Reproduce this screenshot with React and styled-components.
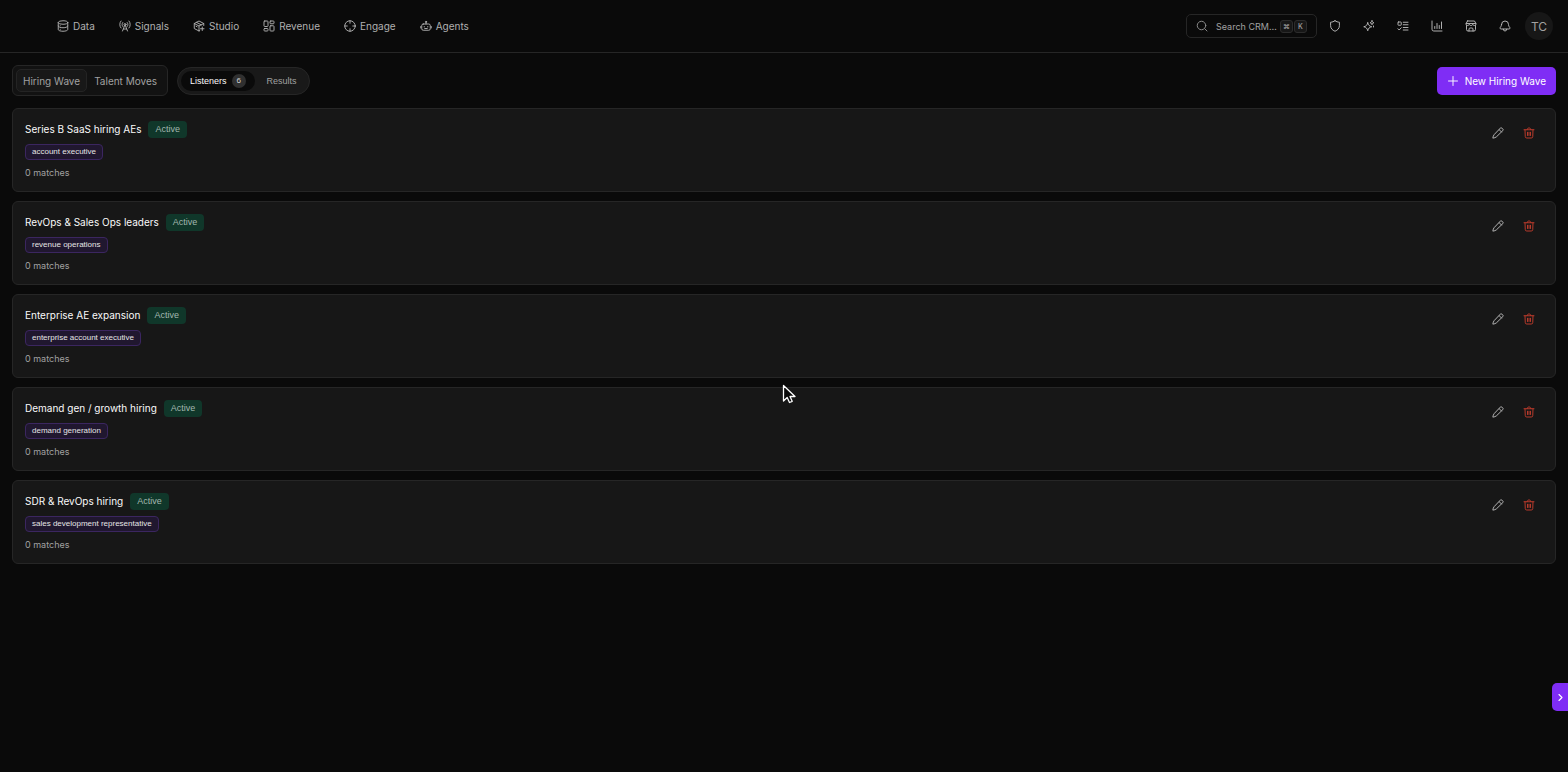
import React from 'react';
import styled, { createGlobalStyle, css } from 'styled-components';

const GlobalStyle = createGlobalStyle`
  * {
    box-sizing: border-box;
  }
  body {
    margin: 0;
    background: #0a0a0a;
    color: #fafafa;
    font-family: Inter, "Liberation Sans", sans-serif;
    font-size: 10px;
  }
  button, input {
    font: inherit;
    color: inherit;
  }
  button {
    padding: 0;
    border: 0;
    background: none;
    cursor: pointer;
  }
`;

const smallFont = '"Liberation Sans", Arial, sans-serif';

const Svg = styled.svg`
  flex: none;
  display: block;
  fill: none;
  stroke: currentColor;
  stroke-width: ${({ $stroke }) => $stroke || 1.9};
  stroke-linecap: round;
  stroke-linejoin: round;
`;

const Header = styled.header`
  display: flex;
  align-items: center;
  justify-content: space-between;
  height: 53px;
  padding: 0 15px 0 57px;
  border-bottom: 1px solid #262626;
`;

const Nav = styled.nav`
  display: flex;
  gap: 24px;
`;

const NavLink = styled.a`
  display: flex;
  align-items: center;
  gap: 4px;
  color: #b0b0b0;
  line-height: 16px;
  text-decoration: none;
`;

const Tools = styled.div`
  display: flex;
  align-items: center;
`;

const SearchBox = styled.label`
  display: flex;
  align-items: center;
  width: 131px;
  height: 24px;
  margin-right: 1px;
  padding: 0 9px;
  border: 1px solid #262626;
  border-radius: 5px;
  color: #8f8f8f;
`;

const SearchInput = styled.input`
  flex: 1;
  min-width: 0;
  margin: 0 2px 0 8px;
  padding: 0;
  border: 0;
  outline: 0;
  background: none;
  font-size: 9px;
  &::placeholder {
    color: #a1a1a1;
    opacity: 1;
  }
`;

const Keys = styled.span`
  display: flex;
  gap: 1px;
`;

const Key = styled.kbd`
  display: flex;
  align-items: center;
  justify-content: center;
  width: 13px;
  height: 13px;
  border: 1px solid #2c2c2c;
  border-radius: 3px;
  background: #171717;
  color: #a1a1a1;
  font-family: Inter, "DejaVu Sans", sans-serif;
  font-size: 7px;
  font-weight: 500;
`;

const ToolButton = styled.button`
  display: flex;
  align-items: center;
  justify-content: center;
  width: 34px;
  height: 28px;
  color: #b8b8b8;
  &:nth-of-type(6) {
    margin-right: 3px;
  }
`;

const Avatar = styled.button`
  width: 28px;
  height: 28px;
  border-radius: 50%;
  background: #171717;
  color: #a1a1a1;
  font-size: 12px;
`;

const Main = styled.main`
  padding: 12px;
`;

const Toolbar = styled.div`
  display: flex;
  align-items: center;
  gap: 9px;
  margin-bottom: 12px;
`;

const ModeTabs = styled.div`
  display: flex;
  padding: 3px;
  border: 1px solid #262626;
  border-radius: 6px;
  background: #121212;
`;

const ModeTab = styled.button`
  height: 23px;
  padding: 0 6px;
  border: 1px solid transparent;
  border-radius: 5px;
  color: #a1a1a1;
  ${({ $active }) => $active && css`
    border-color: #242424;
    background: #181818;
  `}
`;

const ViewTabs = styled.div`
  display: flex;
  gap: 3px;
  padding: 3px;
  border: 1px solid #262626;
  border-radius: 14px;
  background: #191919;
`;

const ViewTab = styled.button`
  display: flex;
  align-items: center;
  gap: 5px;
  height: 20px;
  padding: 0 9px;
  border-radius: 10px;
  color: #a1a1a1;
  font-family: ${smallFont};
  font-size: 9px;
  ${({ $active }) => $active && css`
    background: #0a0a0a;
    color: #fafafa;
  `}
`;

const Count = styled.span`
  width: 14px;
  border-radius: 7px;
  background: #303030;
  color: #d4d4d4;
  font-size: 8px;
  line-height: 14px;
`;

const NewButton = styled.button`
  display: flex;
  align-items: center;
  gap: 6px;
  height: 28px;
  margin-left: auto;
  padding: 0 10px;
  border-radius: 5px;
  background: #7f2df5;
  color: #fff;
`;

const CardList = styled.ul`
  display: flex;
  flex-direction: column;
  gap: 9px;
  margin: 0;
  padding: 0;
  list-style: none;
`;

const Card = styled.li`
  display: flex;
  align-items: flex-start;
  justify-content: space-between;
  padding: 12px;
  border: 1px solid #262626;
  border-radius: 6px;
  background: #171717;
`;

const Info = styled.div`
  display: flex;
  flex-direction: column;
  align-items: flex-start;
  gap: 6px;
`;

const TitleRow = styled.div`
  display: flex;
  align-items: center;
  gap: 7px;
`;

const Title = styled.h3`
  margin: 0;
  font-size: 10px;
  font-weight: 400;
  line-height: 17px;
`;

const Status = styled.span`
  padding: 0 7px;
  border-radius: 4px;
  background: #10372a;
  color: #a3b8af;
  font-family: ${smallFont};
  font-size: 9px;
  line-height: 17px;
`;

const Tag = styled.span`
  padding: 0 6px;
  border: 1px solid #3b2660;
  border-radius: 4px;
  background: #20172f;
  color: #e5e5e5;
  font-family: ${smallFont};
  font-size: 8px;
  line-height: 14px;
`;

const Matches = styled.p`
  margin: 0;
  color: #a1a1a1;
  font-size: 9px;
  line-height: 13px;
`;

const Actions = styled.div`
  display: flex;
  gap: 7px;
  padding-right: 2px;
`;

const ActionButton = styled.button`
  display: flex;
  align-items: center;
  justify-content: center;
  width: 24px;
  height: 24px;
  color: ${({ $danger }) => ($danger ? '#c03c2c' : '#b8b8b8')};
`;

const Drawer = styled.button`
  position: fixed;
  right: 0;
  bottom: 61px;
  display: flex;
  align-items: center;
  justify-content: center;
  width: 16px;
  height: 28px;
  border-radius: 5px 0 0 5px;
  background: #7f2df5;
  color: #fff;
`;

const Cursor = styled.svg`
  position: fixed;
  top: 50%;
  left: 50%;
  margin: -2px 0 0 -2px;
  pointer-events: none;
`;

const paths = {
  data: (
    <>
      <ellipse cx="12" cy="5" rx="9.500" ry="3.500" />
      <path d="M2.500 5v14c0 2 4.300 3.500 9.500 3.500s9.500-1.500 9.500-3.500V5" />
      <path d="M2.500 12c0 2 4.300 3.500 9.500 3.500s9.500-1.500 9.500-3.500" />
      <path d="M6.500 11.500v.1M6.500 18.500v.1" />
    </>
  ),
  signals: (
    <>
      <path d="M4 2C.7 5.500.7 12.500 4 16M7.500 5c-1.800 2.200-1.800 6 0 8M20 2c3.300 3.500 3.300 10.500 0 14M16.500 5c1.800 2.200 1.800 6 0 8" />
      <circle cx="12" cy="9" r="2" />
      <path d="M11.300 11 7 22M12.700 11 17 22M9 18h6" />
    </>
  ),
  studio: (
    <>
      <path d="M21.500 11V7L12 2 2.500 7v10l9.500 5 1.500-.8M2.500 7l9.500 5 9.500-5M12 12v10M7 4.700l9.500 5M6 12.500l2 1" />
      <path d="M18.500 14v7M15 17.500h7" />
    </>
  ),
  revenue: (
    <>
      <rect x="2" y="2" width="8" height="11" rx="1.500" />
      <rect x="14" y="2" width="8" height="5.500" rx="1.500" />
      <rect x="14" y="11.500" width="8" height="10.500" rx="1.500" />
      <rect x="2" y="17" width="8" height="5" rx="1.500" />
    </>
  ),
  engage: (
    <>
      <circle cx="12" cy="12" r="10.500" />
      <path d="M12 1.500v5M12 17.500v5M1.500 12h5M17.500 12h5" />
    </>
  ),
  agents: (
    <>
      <rect x="3.500" y="8" width="17" height="12.500" rx="3" />
      <circle cx="12" cy="3.700" r="1.200" />
      <path d="M12 5v3M1.500 13v3M22.500 13v3M8.500 13v1M15.500 13v1M9.500 17h5" />
    </>
  ),
  search: (
    <>
      <circle cx="11" cy="11" r="8.500" />
      <path d="m17.500 17.500 4.500 4.500" />
    </>
  ),
  shield: <path d="M12 1.500c-2.700 1.800-5.500 2.700-8.800 3v6.800c0 5.500 3.500 9 8.800 11.200 5.300-2.200 8.800-5.700 8.800-11.200V4.500c-3.300-.3-6.100-1.200-8.800-3Z" />,
  sparkles: (
    <>
      <path d="M9.500 5.500c1.200 5 3 6.800 8 8-5 1.200-6.800 3-8 8-1.200-5-3-6.800-8-8 5-1.200 6.800-3 8-8Z" />
      <path d="M18 1.500c.5 2.600 1.400 3.500 4 4-2.600.5-3.500 1.400-4 4-.5-2.600-1.400-3.500-4-4 2.600-.5 3.500-1.400 4-4ZM21 12v2" />
    </>
  ),
  tasks: (
    <>
      <rect x="2" y="4" width="6.500" height="6.500" rx="1" />
      <path d="M12.500 4.500H22M12.500 9.500H22M12.500 15H22M12.500 20H22M2 17.500l2.300 2.500 4.200-4.500" />
    </>
  ),
  chart: <path d="M2 2v16.500A3.500 3.500 0 0 0 5.500 22H22M7.500 13v4M12 7v10M16.500 11v6M21 4v13" />,
  store: (
    <>
      <path d="M3 11v8a3 3 0 0 0 3 3h12a3 3 0 0 0 3-3v-8M5 2h14l3 5.500c0 2.200-1.500 3.500-3.300 3.500s-3.200-1-3.200-2.500C15.500 10 14 11 12 11S8.500 10 8.500 8.500C8.500 10 7 11 5.300 11S2 9.700 2 7.500L5 2ZM2.500 7h19" />
      <path d="M8 22v-4c0-1.200.8-2 2-2h4c1.200 0 2 .8 2 2v4" />
    </>
  ),
  bell: <path d="M5 9a7 7 0 0 1 14 0c0 4.800 3 5 3 7.200 0 1.100-.9 1.800-2.200 1.800H4.200C2.900 18 2 17.300 2 16.200 2 14 5 13.800 5 9ZM8.500 18.500a3.500 3.500 0 0 0 7 0" />,
  plus: <path d="M12 3v18M3 12h18" />,
  pencil: <path d="m14 5 2.800-2.700c.9-.9 2.200-.9 3.100 0l1.800 1.800c.9.900.9 2.200 0 3.100L9 19.500c-2 1.800-4 2.200-7.300 2.800.5-3.300 1-5.300 2.800-7.300L14 5l5 5" />,
  trash: (
    <>
      <path d="M2 5.500h20M4 5.500l.5 13.500a3 3 0 0 0 3 3h9a3 3 0 0 0 3-3L20 5.500M8 5.500l1.200-2.300c.4-.8 1-1.200 1.800-1.200h2c.8 0 1.400.4 1.800 1.200L16 5.500" />
      <path d="M9 10.500v6.500M15 10.500v6.500M12 10.500v6.500" />
    </>
  ),
  chevron: <path d="m8 4 8 8-8 8" />,
};

const Icon = ({ name, size = 12, stroke }) => (
  <Svg viewBox="0 0 24 24" width={size} height={size} $stroke={stroke} aria-hidden="true">
    {paths[name]}
  </Svg>
);

const navItems = [
  ['data', 'Data'],
  ['signals', 'Signals'],
  ['studio', 'Studio'],
  ['revenue', 'Revenue'],
  ['engage', 'Engage'],
  ['agents', 'Agents'],
];

const tools = [
  ['shield', 'Security'],
  ['sparkles', 'Assistant'],
  ['tasks', 'Tasks'],
  ['chart', 'Reports'],
  ['store', 'Marketplace'],
  ['bell', 'Notifications'],
];

const listeners = [
  { title: 'Series B SaaS hiring AEs', tag: 'account executive' },
  { title: 'RevOps & Sales Ops leaders', tag: 'revenue operations' },
  { title: 'Enterprise AE expansion', tag: 'enterprise account executive' },
  { title: 'Demand gen / growth hiring', tag: 'demand generation' },
  { title: 'SDR & RevOps hiring', tag: 'sales development representative' },
];

const ListenerCard = ({ title, tag }) => (
  <Card>
    <Info>
      <TitleRow>
        <Title>{title}</Title>
        <Status>Active</Status>
      </TitleRow>
      <Tag>{tag}</Tag>
      <Matches>0 matches</Matches>
    </Info>
    <Actions>
      <ActionButton aria-label={`Edit ${title}`}><Icon name="pencil" /></ActionButton>
      <ActionButton $danger aria-label={`Delete ${title}`}><Icon name="trash" /></ActionButton>
    </Actions>
  </Card>
);

const App = () => {
  return (
    <>
      <GlobalStyle />
      <Header>
        <Nav>
          {navItems.map(([icon, label]) => (
            <NavLink key={icon} href={`#${icon}`}>
              <Icon name={icon} />
              {label}
            </NavLink>
          ))}
        </Nav>
        <Tools>
          <SearchBox>
            <Icon name="search" />
            <SearchInput type="text" placeholder="Search CRM…" aria-label="Search CRM" />
            <Keys>
              <Key>⌘</Key>
              <Key>K</Key>
            </Keys>
          </SearchBox>
          {tools.map(([icon, label]) => (
            <ToolButton key={icon} aria-label={label}><Icon name={icon} /></ToolButton>
          ))}
          <Avatar>TC</Avatar>
        </Tools>
      </Header>
      <Main>
        <Toolbar>
          <ModeTabs>
            <ModeTab $active>Hiring Wave</ModeTab>
            <ModeTab>Talent Moves</ModeTab>
          </ModeTabs>
          <ViewTabs>
            <ViewTab $active>Listeners <Count>6</Count></ViewTab>
            <ViewTab>Results</ViewTab>
          </ViewTabs>
          <NewButton><Icon name="plus" />New Hiring Wave</NewButton>
        </Toolbar>
        <CardList>
          {listeners.map((item) => (
            <ListenerCard key={item.title} {...item} />
          ))}
        </CardList>
      </Main>
      <Drawer aria-label="Open panel"><Icon name="chevron" size={9} stroke={3} /></Drawer>
      <Cursor width="14" height="20" viewBox="0 0 14 20" aria-hidden="true">
        <path
          d="M1.500 1.500v15.500l3.700-3.500 2.300 5 2.700-1.200-2.200-4.800h5L1.500 1.500Z"
          fill="#0a0a0a"
          stroke="#fff"
          strokeWidth="1.300"
          strokeLinejoin="round"
        />
      </Cursor>
    </>
  );
};

export default App;
